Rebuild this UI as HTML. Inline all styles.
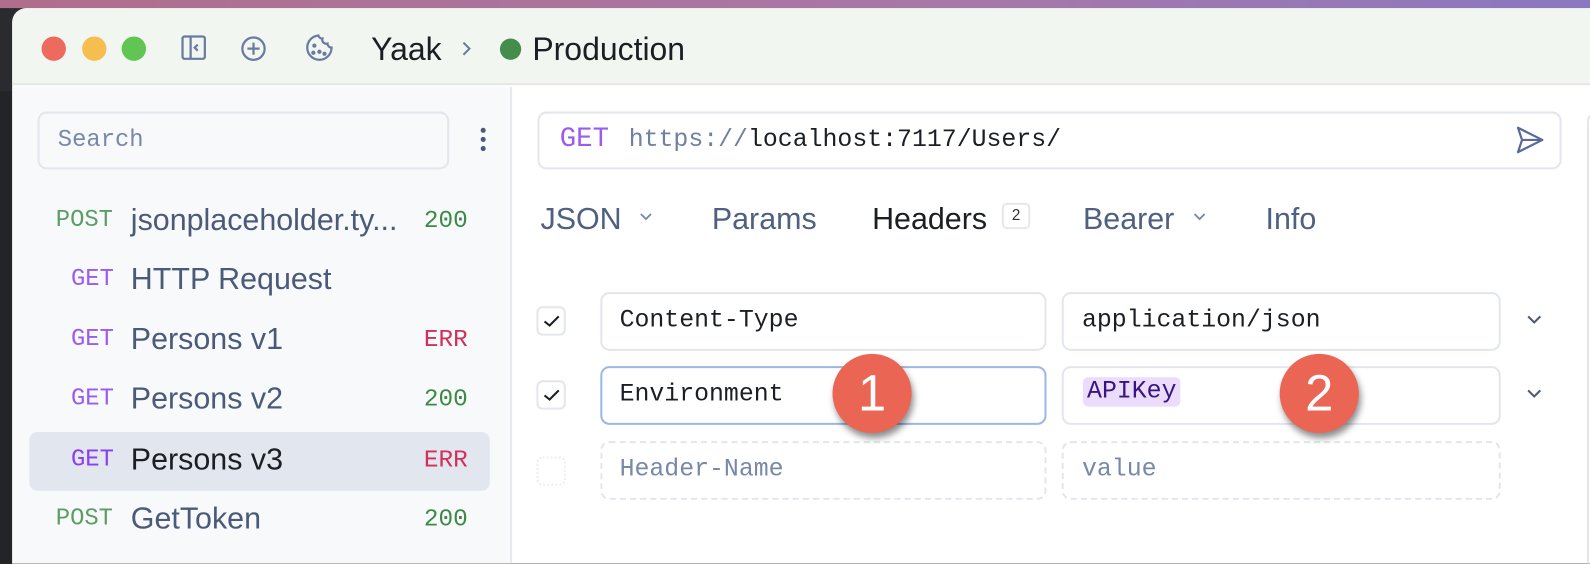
<!DOCTYPE html>
<html style="width:1590px;height:564px;overflow:hidden"><head><meta charset="utf-8"><style>
*{margin:0;padding:0;box-sizing:border-box}
body{width:1590px;height:564px;overflow:hidden;background:#2a2b2e;position:relative;font-family:"Liberation Sans",sans-serif}
#w{position:absolute;left:0;top:0;width:1568px;height:556px;overflow:hidden;transform:scale(1.01403);transform-origin:0 0}
.a{position:absolute;white-space:nowrap}
.mono{font-family:"Liberation Mono","DejaVu Sans Mono",monospace}
.top{left:0;top:0;width:1568px;height:8px;background:linear-gradient(90deg,#b06e8c,#a878a8 60%,#8a78c0)}
.win{left:12px;top:8px;width:1556px;height:548px;background:#fff;border-top-left-radius:14px;overflow:hidden}
.tb{left:0;top:0;width:1556px;height:76px;background:#f2f6f0;border-bottom:2px solid #e3e8e3}
.side{left:0;top:78px;width:493px;height:470px;background:#f8f9fb;border-right:2px solid #e6e9ee}
.dot{width:24px;height:24px;border-radius:50%;top:28px}
.t{color:#1b1f24}
.row{left:17px;width:454px;height:58px;border-radius:8px}
.meth{font-size:23.5px;top:14px}
.name{left:100px;font-size:30px;color:#4a5a78;top:11px}
.st{left:389px;font-size:24px;top:15px}
.box{border:2px solid #e3e6ec;border-radius:9px;background:#fff}
.dash{border:2px dashed #e3e6ec;border-radius:9px}
.cb{width:29px;height:29px;border:2px solid #e3e6ec;border-radius:6px;left:529px}
.tab{font-size:30px;color:#4f6080;top:200px}
.in{font-size:24.5px;top:13px}
</style></head><body>
<div id="w">
<div class="a top"></div>
<div class="a" style="left:0;top:90px;width:12px;height:474px;background:#232427"></div>
<div class="a win">
 <div class="a tb">
  <div class="a dot" style="left:29px;background:#ed6a5e"></div>
  <div class="a dot" style="left:69px;background:#f5be4f"></div>
  <div class="a dot" style="left:108px;background:#61c554"></div>
  <svg class="a" style="left:166px;top:26px" width="28" height="28" viewBox="0 0 28 28" fill="none" stroke="#6a7aa0" stroke-width="2.2"><rect x="2" y="2" width="22" height="22" rx="2"/><line x1="10" y1="2" x2="10" y2="24"/><path d="M17 10l-3 3 3 3"/></svg>
  <svg class="a" style="left:224px;top:26px" width="30" height="30" viewBox="0 0 30 30" fill="none" stroke="#6a7aa0" stroke-width="2.2"><circle cx="14" cy="14" r="11"/><path d="M14 8v12M8 14h12"/></svg>
  <svg class="a" style="left:287px;top:24px" width="32" height="32" viewBox="0 0 32 32" fill="none" stroke="#6a7aa0" stroke-width="2.2"><path d="M15 3a12 12 0 1 0 13 12 4 4 0 0 1-4-4 4 4 0 0 1-5-5 4 4 0 0 1-4-3z"/><circle cx="11" cy="13" r="1" fill="#6a7aa0"/><circle cx="16" cy="19" r="1" fill="#6a7aa0"/><circle cx="10" cy="20" r="1" fill="#6a7aa0"/><circle cx="21" cy="21" r="1" fill="#6a7aa0"/></svg>
  <div class="a t" style="left:354px;top:22px;font-size:31.5px">Yaak</div>
  <svg class="a" style="left:441px;top:30px" width="14" height="20" viewBox="0 0 14 20" fill="none" stroke="#6a7aa0" stroke-width="2"><path d="M4 4l6 6-6 6"/></svg>
  <div class="a" style="left:481px;top:30px;width:21px;height:21px;border-radius:50%;background:#448d4c"></div>
  <div class="a t" style="left:513px;top:22px;font-size:31.5px">Production</div>
 </div>
 <div class="a side">
  <div class="a box" style="left:25px;top:24px;width:406px;height:57px;background:#f8f9fb"><span class="a mono" style="left:18px;top:13px;font-size:23.5px;color:#7888a8">Search</span></div>
  <div class="a" style="left:462px;top:40px;width:5px;height:5px;border-radius:50%;background:#4a5a78;box-shadow:0 9px 0 #4a5a78,0 18px 0 #4a5a78"></div>
  <div class="a row" style="top:104px"><span class="a mono meth" style="left:26px;color:#5a9e64">POST</span><span class="a name">jsonplaceholder.ty...</span><span class="a mono st" style="color:#3d8a45">200</span></div>
  <div class="a row" style="top:162px"><span class="a mono meth" style="left:41px;color:#9a5cf0">GET</span><span class="a name">HTTP Request</span></div>
  <div class="a row" style="top:221px"><span class="a mono meth" style="left:41px;color:#9a5cf0">GET</span><span class="a name">Persons v1</span><span class="a mono st" style="color:#d0305a">ERR</span></div>
  <div class="a row" style="top:280px"><span class="a mono meth" style="left:41px;color:#9a5cf0">GET</span><span class="a name">Persons v2</span><span class="a mono st" style="color:#3d8a45">200</span></div>
  <div class="a row" style="top:340px;background:#e2e6ee"><span class="a mono meth" style="left:41px;color:#8a3ef0">GET</span><span class="a name" style="color:#1b1f24">Persons v3</span><span class="a mono st" style="color:#d0305a">ERR</span></div>
  <div class="a row" style="top:398px"><span class="a mono meth" style="left:26px;color:#5a9e64">POST</span><span class="a name">GetToken</span><span class="a mono st" style="color:#3d8a45">200</span></div>
 </div>
</div>
<div class="a box" style="left:530px;top:110px;width:1010px;height:57px"><span class="a mono" style="left:20px;top:11px;font-size:27px;color:#9a5cf0">GET</span><span class="a mono" style="left:88px;top:13px;font-size:24.5px;color:#7080a0">https://<span style="color:#1b1f24">localhost:7117/Users/</span></span></div>
<svg class="a" style="left:1494px;top:124px" width="30" height="28" viewBox="0 0 30 28" fill="none" stroke="#5a6a98" stroke-width="2.2" stroke-linejoin="round"><path d="M3 2l24 12-24 12 4-12z"/><path d="M7 14h20"/></svg>
<div class="a" style="left:1565px;top:110px;width:40px;height:470px;border:2px solid #e3e6ec;border-radius:10px"></div>
<div class="a tab" style="left:533px">JSON</div>
<svg class="a" style="left:629px;top:208px" width="16" height="12" viewBox="0 0 16 12" fill="none" stroke="#7888a8" stroke-width="1.8"><path d="M3 3l5 5 5-5"/></svg>
<div class="a tab" style="left:702px">Params</div>
<div class="a tab" style="left:860px;color:#1b1f24">Headers</div>
<div class="a" style="left:988px;top:200px;width:28px;height:26px;border:2px solid #e6e8ee;border-radius:5px;font-size:15px;color:#333;text-align:center;line-height:22px">2</div>
<div class="a tab" style="left:1068px">Bearer</div>
<svg class="a" style="left:1175px;top:208px" width="16" height="12" viewBox="0 0 16 12" fill="none" stroke="#7888a8" stroke-width="1.8"><path d="M3 3l5 5 5-5"/></svg>
<div class="a tab" style="left:1248px">Info</div>

<div class="a cb" style="top:302px"></div><svg class="a" style="left:532px;top:305px" width="24" height="24" viewBox="0 0 24 24" fill="none" stroke="#1b1f24" stroke-width="2"><path d="M5 12l5 4 9-9"/></svg>
<div class="a cb" style="top:375px"></div><svg class="a" style="left:532px;top:378px" width="24" height="24" viewBox="0 0 24 24" fill="none" stroke="#1b1f24" stroke-width="2"><path d="M5 12l5 4 9-9"/></svg>
<div class="a" style="left:529px;top:450px;width:29px;height:29px;border:2px dotted #eceef2;border-radius:6px"></div>

<div class="a box" style="left:592px;top:288px;width:440px;height:58px"><span class="a mono in" style="left:17px;color:#1b1f24">Content-Type</span></div>
<div class="a box" style="left:1047px;top:288px;width:433px;height:58px"><span class="a mono in" style="left:18px;color:#1b1f24">application/json</span></div>
<div class="a box" style="left:592px;top:361px;width:440px;height:58px;border-color:#9ab8e6"><span class="a mono in" style="left:17px;color:#1b1f24">Environment</span></div>
<div class="a box" style="left:1047px;top:361px;width:433px;height:58px"><span class="a mono" style="left:19px;top:9px;font-size:24.5px;color:#3a1480;background:#ebdcfb;border-radius:5px;padding:1px 4px">APIKey</span></div>
<div class="a dash" style="left:592px;top:435px;width:440px;height:58px"><span class="a mono in" style="left:17px;color:#7888a8">Header-Name</span></div>
<div class="a dash" style="left:1047px;top:435px;width:433px;height:58px"><span class="a mono in" style="left:18px;color:#7888a8">value</span></div>
<svg class="a" style="left:1503px;top:308px" width="20" height="14" viewBox="0 0 20 14" fill="none" stroke="#4a5a78" stroke-width="2"><path d="M4 4l6 6 6-6"/></svg>
<svg class="a" style="left:1503px;top:381px" width="20" height="14" viewBox="0 0 20 14" fill="none" stroke="#4a5a78" stroke-width="2"><path d="M4 4l6 6 6-6"/></svg>

<div class="a" style="left:821px;top:349px;width:78px;height:78px;border-radius:50%;background:#ea6554;box-shadow:2px 5px 7px rgba(0,0,0,.45);color:#fff;font-size:50px;text-align:center;line-height:78px">1</div>
<div class="a" style="left:1262px;top:349px;width:78px;height:78px;border-radius:50%;background:#ea6554;box-shadow:2px 5px 7px rgba(0,0,0,.45);color:#fff;font-size:50px;text-align:center;line-height:78px">2</div>
</div>
</body></html>
